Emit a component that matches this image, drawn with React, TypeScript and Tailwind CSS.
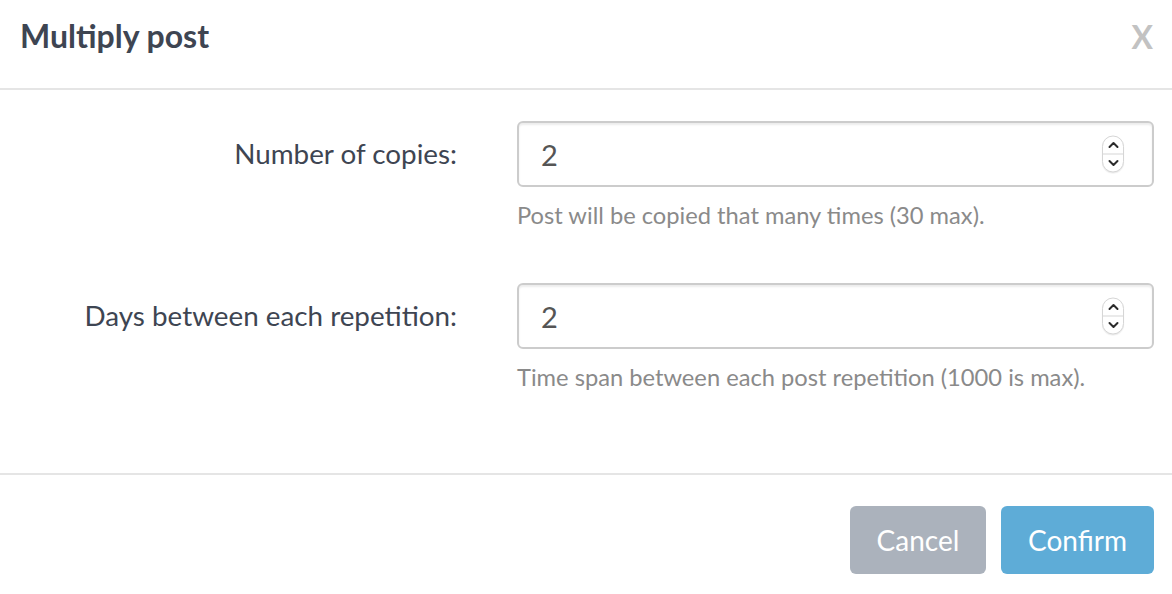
import React from "react";

const Spinner = () => (
  <div className="absolute right-[30px] top-1/2 -translate-y-1/2 w-[22px] h-[37px] rounded-full border border-[#d6d6d6] bg-white flex flex-col overflow-hidden shadow-[0_1px_1px_rgba(0,0,0,0.08)]">
    <div className="flex-1 flex items-center justify-center border-b border-[#d6d6d6]">
      <svg width="11" height="7" viewBox="0 0 11 7" fill="none">
        <path d="M1.5 5.5 L5.5 1.5 L9.5 5.5" stroke="#2b2b2b" strokeWidth="2" strokeLinecap="round" strokeLinejoin="round" />
      </svg>
    </div>
    <div className="flex-1 flex items-center justify-center">
      <svg width="11" height="7" viewBox="0 0 11 7" fill="none">
        <path d="M1.5 1.5 L5.5 5.5 L9.5 1.5" stroke="#2b2b2b" strokeWidth="2" strokeLinecap="round" strokeLinejoin="round" />
      </svg>
    </div>
  </div>
);

interface IFieldRow {
  label: string;
  value: string;
  help: string;
}

const FieldRow: React.FC<IFieldRow> = ({ label, value, help }) => (
  <div className="flex">
    <div className="w-[457px] h-[66px] flex items-center justify-end text-[27.8px] text-[#3e4552]">
      {label}
    </div>
    <div className="ml-[60px] w-[637px]">
      <div className="relative">
        <input
          type="text"
          readOnly
          value={value}
          className="w-full h-[66px] border-2 border-[#cccccc] rounded-md pl-[22px] pr-[23px] text-[29px] text-[#555555] outline-none shadow-[inset_0_2px_2px_rgba(0,0,0,0.075)] font-['Lato']"
        />
        <Spinner />
      </div>
      <div className="mt-[13px] text-[23.7px] leading-[30px] text-[#8a8a8a]">{help}</div>
    </div>
  </div>
);

export default function App() {
  return (
    <div className="w-[1172px] h-[594px] bg-white font-['Lato',sans-serif] flex flex-col">
      <div className="h-[90px] flex items-start justify-between pt-5 pl-5 pr-[19px] border-b-2 border-[#e5e5e5]">
        <h4 className="text-[32px] font-bold text-[#3e4552] leading-none">Multiply post</h4>
        <button className="text-[32px] font-bold text-[#c2c2c2] leading-none mt-[1px]">X</button>
      </div>
      <div className="pt-[31px] h-[385px] border-b-2 border-[#e5e5e5] flex flex-col gap-[53px]">
        <FieldRow
          label="Number of copies:"
          value="2"
          help="Post will be copied that many times (30 max)."
        />
        <FieldRow
          label="Days between each repetition:"
          value="2"
          help="Time span between each post repetition (1000 is max)."
        />
      </div>
      <div className="pt-[31px] pr-[18px] flex justify-end gap-[15px]">
        <button className="w-[136px] h-[68px] rounded-md bg-[#abb2bc] text-white text-[28px]">
          Cancel
        </button>
        <button className="w-[153px] h-[68px] rounded-md bg-[#5eacd7] text-white text-[28px]">
          Confirm
        </button>
      </div>
    </div>
  );
}
